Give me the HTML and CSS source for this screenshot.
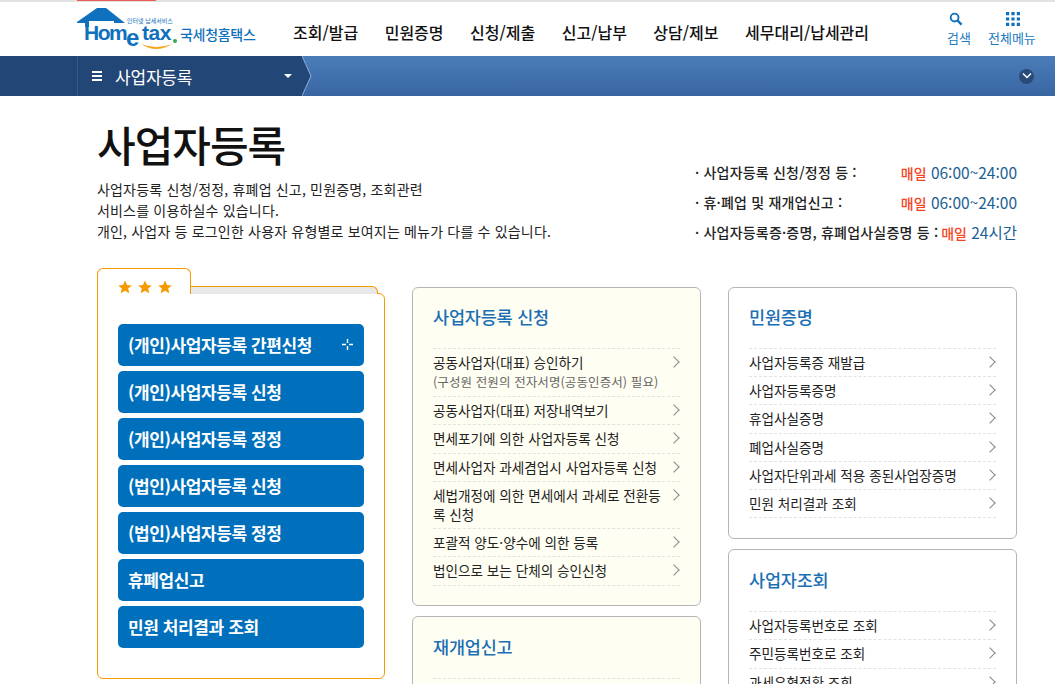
FILE: index.html
```html
<!doctype html>
<html lang="ko">
	<head>
		<meta charset="utf-8" />
		<title>사업자등록</title>
		<link rel="stylesheet" href="styles.css">
	</head>
	<body>
		<div class="top-line"><span class="top-mark"></span></div>

		<header>
			<a class="logo">
				<svg width="182" height="46" viewBox="0 0 182 46">
					<path d="M1 14 L21 0 L30 0 L49 15 L38 15 L38 13 L13 13 L13 19 L9 19 L9 15 L1 15 Z" fill="#0f70bd"/>
					<text class="logo-small" x="51" y="15">인터넷 납세서비스</text>
					<text class="logo-home" x="8" y="31.5">Hom</text>
					<text class="logo-e" x="50" y="38">e</text>
					<text class="logo-tax" x="66" y="31.5">tax</text>
					<circle cx="99" cy="33" r="2" fill="#3aa652"/>
					<path d="M65 36 Q80 46 96 36 Q80 42 65 36 Z" fill="#f5a623"/>
					<text class="logo-name" x="104" y="32">국세청홈택스</text>
				</svg>
			</a>
			<nav class="gnb">
				<a>조회/발급</a>
				<a>민원증명</a>
				<a>신청/제출</a>
				<a>신고/납부</a>
				<a>상담/제보</a>
				<a>세무대리/납세관리</a>
			</nav>
			<div class="util">
				<a class="util-item">
					<svg class="icon-search" width="14" height="14" viewBox="0 0 15 15">
						<circle cx="6" cy="6" r="4.2" fill="none" stroke="#0f70bd" stroke-width="2"/>
						<path d="M9 9 L13.5 13.5" stroke="#0f70bd" stroke-width="2.4"/>
					</svg>
					<span>검색</span>
				</a>
				<a class="util-item">
					<svg class="icon-grid" width="14" height="14" viewBox="0 0 13 13">
						<path fill="#0f70bd" d="M0 0h3v3H0zM5 0h3v3H5zM10 0h3v3h-3zM0 5h3v3H0zM5 5h3v3H5zM10 5h3v3h-3zM0 10h3v3H0zM5 10h3v3H5zM10 10h3v3h-3z"/>
					</svg>
					<span>전체메뉴</span>
				</a>
			</div>
		</header>

		<div class="sub-bar">
			<div class="sub-menu">
				<span class="burger"><i></i><i></i><i></i></span>
				<span class="sub-title">사업자등록</span>
				<span class="caret"></span>
				<svg class="sub-arrow" width="12" height="40" viewBox="0 0 12 40">
					<path d="M0 0 L9 20 L0 40 Z" fill="#224675"/>
					<path d="M0 0 L9 20 L0 40" fill="none" stroke="#8fb0d6" stroke-width="1"/>
				</svg>
			</div>
			<a class="more-btn">
				<svg width="10" height="8" viewBox="0 0 10 8">
					<path d="M1 1.5 L5 5.5 L9 1.5" fill="none" stroke="#fff" stroke-width="1.5"/>
				</svg>
			</a>
		</div>

		<main>
			<section class="intro">
				<div class="intro-left">
					<h1>사업자등록</h1>
					<p>사업자등록 신청/정정, 휴폐업 신고, 민원증명, 조회관련<br>서비스를 이용하실수 있습니다.<br>개인, 사업자 등 로그인한 사용자 유형별로 보여지는 메뉴가 다를 수 있습니다.</p>
				</div>
				<ul class="hours">
					<li><b>· 사업자등록 신청/정정 등 :</b><span><em>매일</em> 06:00~24:00</span></li>
					<li><b>· 휴·폐업 및 재개업신고 :</b><span><em>매일</em> 06:00~24:00</span></li>
					<li><b>· 사업자등록증·증명, 휴폐업사실증명 등 :</b><span><em>매일</em> 24시간</span></li>
				</ul>
			</section>

			<section class="columns">
				<div class="fav">
					<div class="fav-head">
						<div class="fav-tab">
							<svg width="54" height="14" viewBox="0 0 54 14">
								<path id="star" fill="#f79a00" d="M7 0.5 L9 5 L13.8 5.4 L10.2 8.6 L11.3 13.3 L7 10.8 L2.7 13.3 L3.8 8.6 L0.2 5.4 L5 5 Z"/>
								<use href="#star" x="20"/>
								<use href="#star" x="40"/>
							</svg>
						</div>
						<div class="fav-strip"></div>
					</div>
					<div class="fav-body">
						<a class="fav-btn">(개인)사업자등록 간편신청
							<svg width="11" height="11" viewBox="0 0 11 11">
								<path d="M5.5 0 V4 M5.5 7 V11 M0 5.5 H4 M7 5.5 H11" stroke="#fff" stroke-width="1.4"/>
							</svg>
						</a>
						<a class="fav-btn">(개인)사업자등록 신청</a>
						<a class="fav-btn">(개인)사업자등록 정정</a>
						<a class="fav-btn">(법인)사업자등록 신청</a>
						<a class="fav-btn">(법인)사업자등록 정정</a>
						<a class="fav-btn">휴폐업신고</a>
						<a class="fav-btn">민원 처리결과 조회</a>
					</div>
				</div>

				<div class="col">
					<div class="card yellow">
						<h2>사업자등록 신청</h2>
						<ul class="links">
							<li><span>공동사업자(대표) 승인하기<small>(구성원 전원의 전자서명(공동인증서) 필요)</small></span></li>
							<li><span>공동사업자(대표) 저장내역보기</span></li>
							<li><span>면세포기에 의한 사업자등록 신청</span></li>
							<li><span>면세사업자 과세겸업시 사업자등록 신청</span></li>
							<li><span>세법개정에 의한 면세에서 과세로 전환등록 신청</span></li>
							<li><span>포괄적 양도·양수에 의한 등록</span></li>
							<li><span>법인으로 보는 단체의 승인신청</span></li>
						</ul>
					</div>
					<div class="card yellow">
						<h2>재개업신고</h2>
						<ul class="links">
							<li><span>재개업신고</span></li>
						</ul>
					</div>
				</div>

				<div class="col">
					<div class="card">
						<h2>민원증명</h2>
						<ul class="links">
							<li><span>사업자등록증 재발급</span></li>
							<li><span>사업자등록증명</span></li>
							<li><span>휴업사실증명</span></li>
							<li><span>폐업사실증명</span></li>
							<li><span>사업자단위과세 적용 종된사업장증명</span></li>
							<li><span>민원 처리결과 조회</span></li>
						</ul>
					</div>
					<div class="card">
						<h2>사업자조회</h2>
						<ul class="links">
							<li><span>사업자등록번호로 조회</span></li>
							<li><span>주민등록번호로 조회</span></li>
							<li><span>과세유형전환 조회</span></li>
						</ul>
					</div>
				</div>
			</section>
		</main>
	</body>
</html>
```

FILE: styles.css
```css
/* 공통 */

html,
body {
	height: 100%;
	overflow: hidden;
}

body {
	margin: 0;
	font-size: 13px;
	font-family: "Noto Sans CJK KR", "Liberation Sans", sans-serif;
	color: #222;
	background: white;
}

ul {
	margin: 0;
	padding: 0;
	list-style: none;
}

/* 맨 위 줄 */

.top-line {
	height: 2px;
	background: #e2e2e2;
}

.top-mark {
	display: block;
	margin-left: 77px;
	width: 79px;
	height: 1px;
	background: #ee5a55;
}

/* 헤더 */

header {
	display: flex;
	height: 54px;
	padding-left: 76px;
}

.logo {
	width: 217px;
	padding-top: 6px;
}

.logo text {
	font-family: "Liberation Sans", sans-serif;
	fill: #0f70bd;
}

.logo .logo-small {
	font-family: "Noto Sans CJK KR", sans-serif;
	font-size: 6px;
}

.logo .logo-home {
	font-size: 21px;
	font-weight: bold;
	letter-spacing: -1.5px;
}

.logo .logo-tax {
	font-size: 21px;
	font-weight: bold;
	letter-spacing: -0.5px;
}

.logo .logo-e {
	font-size: 24px;
	font-weight: bold;
}

.logo .logo-name {
	font-family: "Noto Sans CJK KR", sans-serif;
	font-size: 14px;
	font-weight: 500;
	letter-spacing: -0.3px;
}

.gnb {
	display: flex;
	gap: 26.5px;
	padding-top: 18px;
}

.gnb a {
	font-size: 16px;
	line-height: 24px;
	color: #111;
	font-weight: 500;
	white-space: nowrap;
}

.util {
	display: flex;
	margin-left: 78px;
	gap: 17px;
	padding-top: 10px;
}

.util-item {
	display: flex;
	flex-direction: column;
	align-items: center;
	gap: 3px;
	font-size: 13px;
	line-height: 18px;
	color: #1a7ac0;
	white-space: nowrap;
}

.icon-search {
	margin-right: 6px;
}

.icon-grid {
	margin-left: 3px;
}

/* 파란 서브바 */

.sub-bar {
	display: flex;
	justify-content: space-between;
	align-items: center;
	height: 40px;
	padding-left: 77px;
	padding-right: 21px;
	background: linear-gradient(#4b7db8, #3866a2);
	box-shadow: inset 77px 0 0 #224675;
}

.sub-menu {
	position: relative;
	display: flex;
	align-items: center;
	width: 225px;
	height: 40px;
	padding-left: 14px;
	box-sizing: border-box;
	background: #224675;
	border-left: 1px solid #2f5a90;
}

.burger {
	display: flex;
	flex-direction: column;
	gap: 2px;
	width: 10px;
	margin-right: 13px;
}

.burger i {
	height: 2px;
	background: white;
}

.sub-title {
	font-size: 17px;
	letter-spacing: -0.2px;
	color: white;
	flex: 1;
}

.caret {
	margin-right: 10px;
	border: 4px solid transparent;
	border-top: 4px solid white;
	border-bottom: 0;
}

.sub-arrow {
	position: absolute;
	left: 224px;
	top: 0;
}

.more-btn {
	display: flex;
	align-items: center;
	justify-content: center;
	width: 15px;
	height: 15px;
	border-radius: 50%;
	background: #2a4a78;
}

/* 페이지 소개 */

main {
	padding: 0 38px 0 97px;
}

.intro {
	display: flex;
	justify-content: space-between;
	height: 172px;
}

h1 {
	margin: 20px 0 0;
	font-size: 42px;
	line-height: 56px;
	font-weight: 500;
	color: #111;
	letter-spacing: -1px;
}

.intro p {
	margin: 7px 0 0;
	font-size: 14px;
	line-height: 21px;
	color: #222;
	letter-spacing: 0.18px;
}

.hours {
	width: 322px;
	padding-top: 61px;
}

.hours li {
	display: flex;
	justify-content: space-between;
	height: 30px;
	line-height: 30px;
	white-space: nowrap;
}

.hours b {
	font-size: 14px;
	font-weight: 500;
	color: #222;
	letter-spacing: 0.2px;
}

.hours span {
	font-size: 15.5px;
	color: #1c5f95;
}

.hours em {
	font-size: 14px;
	font-style: normal;
	font-weight: 500;
	color: #f5431e;
}

/* 세 칸 */

.columns {
	display: grid;
	grid-template-columns: 288px 289px 289px;
	column-gap: 27px;
}

/* 자주 찾는 메뉴 */

.fav-head {
	display: flex;
	height: 26px;
	margin-bottom: -1px;
}

.fav-tab {
	position: relative;
	z-index: 1;
	width: 94px;
	height: 26px;
	padding: 11px 0 0 20px;
	box-sizing: border-box;
	background: white;
	border: 1px solid #f79a00;
	border-bottom: 0;
	border-radius: 6px 6px 0 0;
}

.fav-tab svg {
	display: block;
}

.fav-strip {
	flex: 1;
	margin: 18px 7px 0 0;
	background: #e8e8e8;
	border: 1px solid #f79a00;
	border-left: 0;
	border-bottom: 0;
	border-radius: 0 6px 0 0;
}

.fav-body {
	display: flex;
	flex-direction: column;
	gap: 5px;
	height: 386px;
	padding: 30px 20px 0;
	box-sizing: border-box;
	border: 1px solid #f79a00;
	border-radius: 0 6px 6px 6px;
}

.fav-btn {
	display: flex;
	align-items: center;
	justify-content: space-between;
	box-sizing: border-box;
	height: 42px;
	padding: 0 11px 2px 10px;
	background: #0070bc;
	border-radius: 5px;
	color: white;
	font-size: 17px;
	font-weight: 700;
	letter-spacing: -0.4px;
}

/* 카드 */

.col {
	display: flex;
	flex-direction: column;
	gap: 10px;
	padding-top: 19px;
}

.card {
	padding: 0 20px 20px;
	border: 1px solid #b5b5b5;
	border-radius: 6px;
	background: white;
}

.card.yellow {
	padding-bottom: 19px;
	background: #fffef2;
}

h2 {
	margin: 0;
	padding-top: 17px;
	height: 43px;
	font-size: 17.5px;
	line-height: 24px;
	font-weight: 500;
	color: #1a6fb5;
	letter-spacing: -0.2px;
}

.card + .card h2 {
	padding-top: 18px;
}

.links li {
	position: relative;
	padding: 4px 18px 4px 0;
	border-top: 1px dashed #e2e2e2;
	font-size: 13.6px;
	line-height: 19.2px;
	color: #222;
	word-break: break-all;
}

.links li:last-child {
	border-bottom: 1px dashed #e2e2e2;
}

.links li::after {
	content: "";
	position: absolute;
	right: 2px;
	top: 9px;
	width: 7px;
	height: 7px;
	border-top: 1px solid #888;
	border-right: 1px solid #888;
	transform: rotate(45deg);
}

.links small {
	display: block;
	font-size: 12.5px;
	line-height: 20px;
	color: #666;
	letter-spacing: 0.1px;
	white-space: nowrap;
}
```
